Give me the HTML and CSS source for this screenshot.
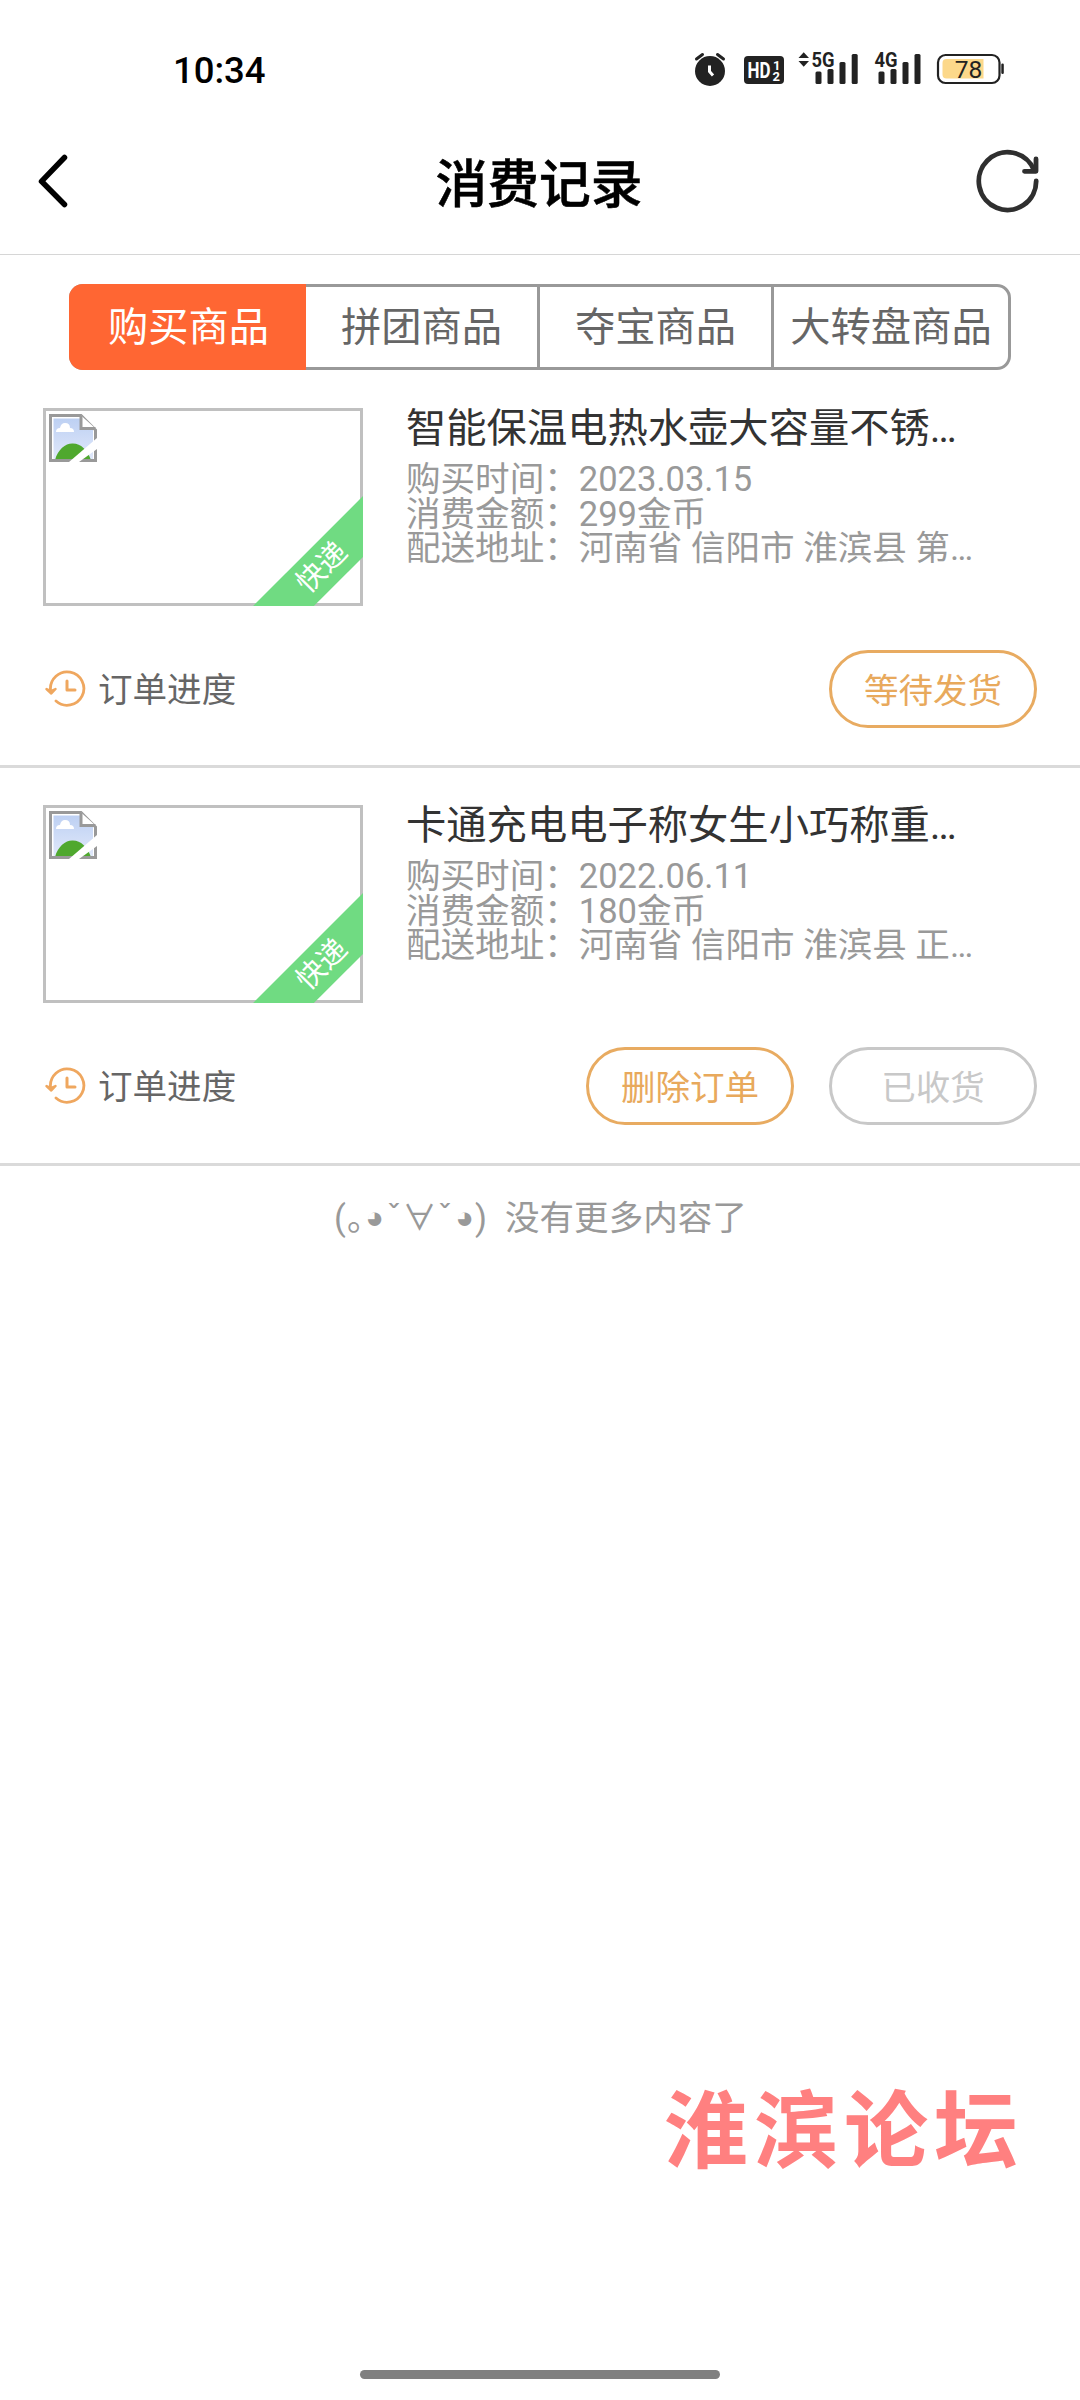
FILE: index.html
```html
<!DOCTYPE html>
<html lang="zh-CN">
<head>
<meta charset="utf-8">
<title>消费记录</title>
<link rel="stylesheet" href="styles.css">
</head>
<body>
<svg class="defs" width="0" height="0" aria-hidden="true">
  <linearGradient id="sky" x1="0" y1="0" x2="0" y2="1"><stop offset="0" stop-color="#bdd0f3"/><stop offset="1" stop-color="#e0e8fa"/></linearGradient>
  <symbol id="broken" viewBox="0 0 48 48">
    <path d="M1.500 1.500H32L46.500 16V46.500H1.500Z" fill="#fff" stroke="#999" stroke-width="3"/>
    <path d="M4.500 4.500H31V16H44V45H4.500Z" fill="url(#sky)"/>
    <path d="M7 18q0-4 4-4 1-5 5-5 5 0 5 5 4 0 4 4Z" fill="#fff"/>
    <path d="M6 46C9 35 17 29 24 29.500Q36 30 42 46Z" fill="#4fa82e"/>
    <path d="M3 46.500H45" stroke="#999" stroke-width="3"/>
    <path d="M32 1.500V14.500H46.500" fill="#fff" stroke="#999" stroke-width="3"/>
    <path d="M20 48L48 24V35L30 48Z" fill="#fff"/>
    <path d="M36 0L48 12V0Z" fill="#fff"/>
  </symbol>
  <symbol id="history" viewBox="0 0 42 38">
    <g fill="none" stroke="#efa75f" stroke-width="2.800" stroke-linecap="round" stroke-linejoin="round">
      <path d="M5.500 20A16.700 16.700 0 1 1 11 31"/>
      <path d="M22 11V20H30" stroke-width="3"/>
    </g>
    <path d="M1.500 19L6 21 10.500 19 6.300 23.500Z" fill="#efa75f" stroke="#efa75f" stroke-width="2.400" stroke-linejoin="round"/>
  </symbol>
</svg>
<div class="screen">
  <div class="status">
    <div class="clock">10:34</div>
    <svg class="status-icons" width="320" height="60" viewBox="690 40 320 60">
      <g fill="#222">
        <circle cx="710" cy="71" r="15"/>
        <path d="M696.500 59L702.500 54.500M717.500 54.500L723.500 59" stroke="#222" stroke-width="3" stroke-linecap="round"/>
        <path d="M709.500 65.500V71.500L713 75.500" fill="none" stroke="#fff" stroke-width="3"/>
        <rect x="744" y="56" width="40" height="28" rx="4"/>
        <path d="M798.500 58L803.700 52.300 809 58ZM798.500 61L803.700 66.700 809 61Z"/>
        <rect x="815.500" y="71.500" width="6" height="12.500" rx="1.500"/><rect x="827.500" y="69" width="6" height="15" rx="1.500"/><rect x="839.500" y="62" width="6" height="22" rx="1.500"/><rect x="851.700" y="54" width="6" height="30" rx="1.500"/>
        <rect x="878.500" y="71.500" width="6" height="12.500" rx="1.500"/><rect x="890.500" y="69" width="6" height="15" rx="1.500"/><rect x="902.500" y="62" width="6" height="22" rx="1.500"/><rect x="914.500" y="54" width="6" height="30" rx="1.500"/>
        <rect x="1001.300" y="63.500" width="2.500" height="10.500" rx="1.200"/>
      </g>
      <g class="tiny">
        <text x="747.500" y="78" font-size="22" textLength="23" lengthAdjust="spacingAndGlyphs" fill="#fff">HD</text>
        <text x="773" y="69.500" font-size="13" fill="#fff">1</text>
        <text x="772.500" y="80.500" font-size="13" fill="#fff">2</text>
        <text x="811.500" y="67" font-size="20" textLength="23" lengthAdjust="spacingAndGlyphs" fill="#222">5G</text>
        <text x="874.500" y="67" font-size="20" textLength="23" lengthAdjust="spacingAndGlyphs" fill="#222">4G</text>
      </g>
      <rect x="938" y="55" width="61.500" height="28" rx="7.500" fill="#fff" stroke="#222" stroke-width="2.200"/>
      <path d="M983.500 59V78.500H946.500a4 4 0 0 1-4-4V63a4 4 0 0 1 4-4Z" fill="#fcd88a"/>
      <text class="level" x="968.500" y="78.300" text-anchor="middle">78</text>
    </svg>
  </div>

  <header class="nav">
    <svg width="48" height="64" viewBox="29 149 48 64"><path d="M63.500 157.500L40.500 181.300 63.500 204.500" fill="none" stroke="#000" stroke-width="5.500" stroke-linecap="round" stroke-linejoin="round"/></svg>
    <h1 class="nav-title">消费记录</h1>
    <svg width="68" height="68" viewBox="974 147 68 68"><g fill="none" stroke="#2f2f2f" stroke-width="4.800" stroke-linecap="round" stroke-linejoin="round"><path d="M1036.200 181A28.700 28.900 0 1 1 1034 170"/><path d="M1036 159V171.300H1024.500" /></g></svg>
  </header>

  <nav class="tabs">
    <div class="tab active">购买商品</div>
    <div class="tab">拼团商品</div>
    <div class="tab">夺宝商品</div>
    <div class="tab">大转盘商品</div>
  </nav>

  <section class="order">
    <div class="goods">
      <div class="thumb"><svg width="48" height="48"><use href="#broken"/></svg><span class="ribbon">快递</span></div>
      <div class="info">
        <h2 class="name">智能保温电热水壶大容量不锈…</h2>
        <p>购买时间：2023.03.15</p>
        <p>消费金额：299金币</p>
        <p>配送地址：河南省 信阳市 淮滨县 第…</p>
      </div>
    </div>
    <div class="actions">
      <svg width="42" height="38"><use href="#history"/></svg>
      <span class="progress">订单进度</span>
      <span class="btn">等待发货</span>
    </div>
  </section>

  <section class="order">
    <div class="goods">
      <div class="thumb"><svg width="48" height="48"><use href="#broken"/></svg><span class="ribbon">快递</span></div>
      <div class="info">
        <h2 class="name">卡通充电电子称女生小巧称重…</h2>
        <p>购买时间：2022.06.11</p>
        <p>消费金额：180金币</p>
        <p>配送地址：河南省 信阳市 淮滨县 正…</p>
      </div>
    </div>
    <div class="actions">
      <svg width="42" height="38"><use href="#history"/></svg>
      <span class="progress">订单进度</span>
      <span class="btn">删除订单</span>
      <span class="btn done">已收货</span>
    </div>
  </section>

  <div class="end"><span class="face"><i class="g-par">(</i><i class="g-dot">｡</i><i class="g-eye">◕</i><i class="g-car">ˇ</i><i class="g-all">∀</i><i class="g-car">ˇ</i><i class="g-eye">◕</i><i class="g-par">)</i></span><span>没有更多内容了</span></div>

  <div class="watermark"><span>淮</span><span>滨</span><span>论</span><span>坛</span></div>
  <div class="home-bar"></div>
</div>
</body>
</html>
```
FILE: styles.css
```css
* { box-sizing: border-box; }
body {
  margin: 0;
  background: #fff;
  font-family: Roboto, "Noto Sans CJK SC", sans-serif;
  color: #333;
}
h1, h2, p { margin: 0; font-weight: 400; }
svg { display: block; flex: none; }
.defs { position: absolute; }
.screen {
  display: flex;
  flex-direction: column;
  width: 1080px;
  height: 2400px;
  overflow: hidden;
}
.status {
  display: flex;
  justify-content: space-between;
  align-items: center;
  height: 110px;
  padding: 30px 70px 0 173px;
}
.clock { font-size: 36.5px; font-weight: 500; color: #000; }
.tiny { font-family: Roboto, sans-serif; font-weight: 700; }
.level { font-family: Roboto, sans-serif; font-size: 24.5px; fill: #222; }

.nav {
  display: flex;
  align-items: center;
  justify-content: space-between;
  height: 145px;
  padding: 0 38px 2px 30px;
  border-bottom: 1px solid #d6d6d6;
}
.nav-title {
  margin-left: 26px;
  padding-top: 10px;
  font-size: 51.8px;
  font-weight: 500;
  line-height: 60px;
  color: #000;
  -webkit-text-stroke: 0.5px #000;
}

.tabs {
  display: flex;
  flex: none;
  width: 942px;
  height: 86px;
  margin: 29px 0 38px 69px;
  border: 3px solid #999;
  border-radius: 14px;
}
.tab {
  display: flex;
  align-items: center;
  justify-content: center;
  width: 234px;
  padding-bottom: 7px;
  border-right: 3px solid #999;
  font-size: 40.3px;
  color: #666;
}
.tab.active {
  width: 237px;
  margin: -3px 0 -3px -3px;
  padding-left: 2px;
  border: 0;
  border-radius: 14px 0 0 14px;
  background: #f63;
  color: #fff;
}
.tab:last-child { border-right: 0; }

.order {
  flex: none;
  height: 360px;
  border-bottom: 3px solid #dadada;
}
.order + .order { margin-top: 37px; height: 361px; }
.goods { display: flex; padding: 0 43px; gap: 43px; height: 198px; }
.thumb {
  position: relative;
  flex: none;
  width: 320px;
  height: 198px;
  padding: 3px;
  border: 3px solid #c0c0c0;
  clip-path: inset(0);
}
.ribbon {
  position: absolute;
  left: 176px;
  top: 135px;
  width: 200px;
  height: 43px;
  line-height: 42px;
  background: #70db82;
  color: #fff;
  font-size: 28.8px;
  text-align: center;
  transform: rotate(-45deg);
}
.info { width: 580px; padding-top: 1px; color: #999; font-size: 34.56px; }
.info p { line-height: 34.56px; white-space: nowrap; }
.name {
  height: 40px;
  margin-bottom: 13px;
  line-height: 40px;
  font-size: 40.3px;
  color: #333;
  white-space: nowrap;
}
.actions {
  display: flex;
  align-items: center;
  gap: 35px;
  height: 78px;
  margin: 44px 43px 0 45px;
}
.progress {
  margin-left: -24px;
  margin-right: auto;
  padding-bottom: 5px;
  font-size: 34.56px;
  color: #666;
}
.btn {
  display: flex;
  align-items: center;
  justify-content: center;
  width: 208px;
  height: 78px;
  padding-bottom: 3px;
  border: 3px solid #e8ab61;
  border-radius: 39px;
  font-size: 34.56px;
  color: #e8a95c;
}
.btn.done { border-color: #c8c8c8; color: #c8c8c8; }

.end {
  display: flex;
  height: 50px;
  margin: 27px 0 0 333px;
  line-height: 50px;
  font-size: 34.56px;
  color: #999;
}
.face { display: flex; width: 172px; }
.face i { display: flex; justify-content: center; font-style: normal; }
.g-par { width: 14px; }
.g-dot { width: 18px; }
.g-eye { width: 19px; font-size: 31px; }
.g-car { width: 20px; }
.g-all { width: 31px; }

.watermark {
  display: flex;
  justify-content: space-between;
  width: 354px;
  margin: auto 62px 195px auto;
  font-family: "Noto Sans CJK SC", sans-serif;
  font-size: 84px;
  line-height: 100px;
  font-weight: 700;
  color: #ff8080;
}
.home-bar {
  flex: none;
  width: 360px;
  height: 9px;
  margin: 0 auto 21px;
  border-radius: 5px;
  background: #808080;
}
```
